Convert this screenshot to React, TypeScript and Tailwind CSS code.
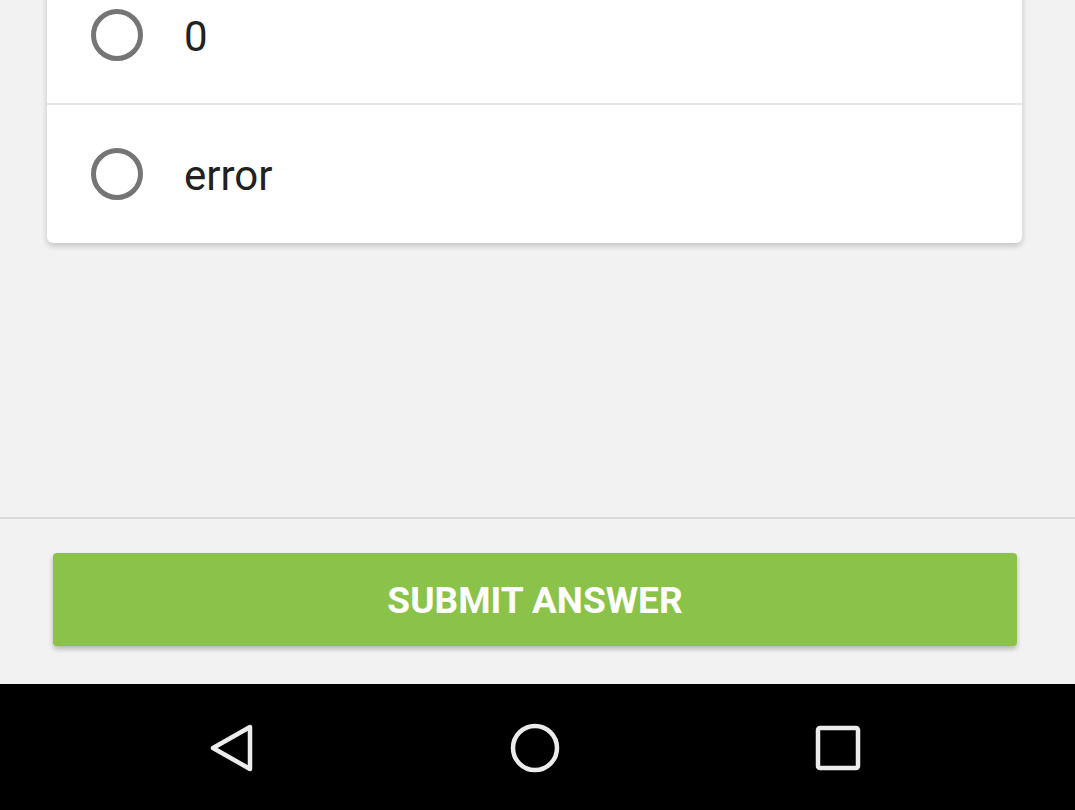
import React from "react";

function Radio() {
  return (
    <svg width="56" height="56" viewBox="0 0 56 56" className="shrink-0">
      <circle cx="28" cy="28" r="23.5" fill="none" stroke="#757575" strokeWidth="5" />
    </svg>
  );
}

function Option({ label, first }: { label: string; first?: boolean }) {
  return (
    <div className={`flex items-center h-[138px] pl-[42px] ${first ? "border-b-2 border-[#e6e6e6]" : ""}`}>
      <Radio />
      <span className="ml-[39px] mt-[4px] text-[42px] text-[#212121] leading-none">
        {label}
      </span>
    </div>
  );
}

export default function App() {
  return (
    <div
      className="w-[1075px] h-[810px] overflow-hidden flex flex-col bg-[#f2f2f2]"
      style={{ fontFamily: "Roboto, 'Liberation Sans', sans-serif" }}
    >
      <div className="h-[517px] shrink-0 pl-[47px] pr-[53px]">
        <div className="-mt-[33px] bg-white rounded-[6px] shadow-[0_3px_6px_rgba(0,0,0,0.2)]">
          <Option label="0" first />
          <Option label="error" />
        </div>
      </div>
      <div className="flex-1 border-t-2 border-[#d9d9d9] pt-[34px] pl-[53px] pr-[58px]">
        <button className="w-full h-[93px] pt-[2px] rounded-[4px] bg-[#8bc34a] text-white font-bold text-[37px] tracking-[0px] shadow-[0_3px_5px_rgba(0,0,0,0.25)]">
          SUBMIT ANSWER
        </button>
      </div>
      <div className="h-[126px] shrink-0 bg-black flex items-center justify-center pr-[5px]">
        <div className="flex items-center justify-between w-[656px] mt-[1px]">
          <svg width="50" height="54" viewBox="0 0 50 54">
            <path d="M43 6 L43 48 L6 27 Z" fill="none" stroke="#ececec" strokeWidth="4.5" strokeLinejoin="round" />
          </svg>
          <svg width="54" height="54" viewBox="0 0 54 54">
            <circle cx="27" cy="27" r="22" fill="none" stroke="#ececec" strokeWidth="4.5" />
          </svg>
          <svg width="50" height="50" viewBox="0 0 50 50">
            <rect x="5" y="5" width="40" height="40" rx="2" fill="none" stroke="#ececec" strokeWidth="4.5" />
          </svg>
        </div>
      </div>
    </div>
  );
}
